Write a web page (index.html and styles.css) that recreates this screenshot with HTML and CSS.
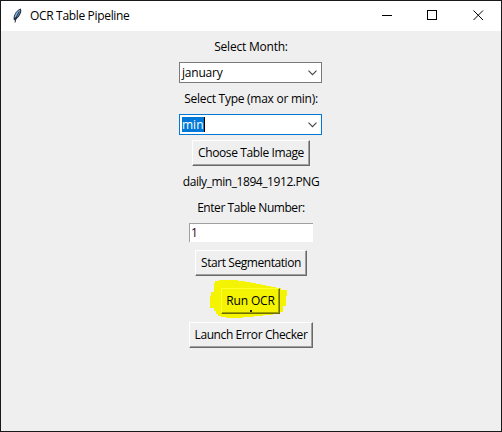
FILE: index.html
```html
<!DOCTYPE html>
<html lang="en">
<head>
<meta charset="utf-8">
<title>OCR Table Pipeline</title>
<link rel="stylesheet" href="styles.css">
</head>
<body>
<div class="window">
  <header class="titlebar">
    <svg class="feather" width="16" height="16" viewBox="0 0 16 16">
      <path d="M5 12.500C3.500 9 6 3 11.500.500c1.800 1.700.4 6-2.300 9l-2.500 2z" fill="#26333f"/>
      <path d="M5.400 9.500C6 6 8 3.200 11 1.500c.6 2.500-1 5.500-3.300 7.800z" fill="#7fb0e4"/>
      <path d="M10.300 3.500Q7 8 6 14.500" fill="none" stroke="#101820" stroke-width=".9"/>
    </svg>
    <h1 class="title"><span class="t w-title">OCR Table Pipeline</span></h1>
    <svg class="control" width="46" height="30" viewBox="0 0 46 30" shape-rendering="crispEdges"><path d="M18 14.500h10" stroke="#000" fill="none"/></svg>
    <svg class="control" width="46" height="30" viewBox="0 0 46 30" shape-rendering="crispEdges"><path d="M17.500 9.500h9v9h-9z" stroke="#000" fill="none"/></svg>
    <svg class="control" width="46" height="30" viewBox="0 0 46 30"><path d="M17.500 9.500l9.500 9.500M27 9.500l-9.500 9.500" stroke="#000" fill="none"/></svg>
  </header>
  <main class="form">
    <div class="label"><span class="t w-month">Select Month:</span></div>
    <div class="combo"><span class="t w-january">january</span>
      <svg class="chevron" width="9" height="6" viewBox="0 0 9 6"><path d="M.5.700l4 4 4-4" fill="none" stroke="#444" stroke-width="1.100"/></svg></div>
    <div class="label"><span class="t w-type">Select Type (max or min):</span></div>
    <div class="combo focused"><span class="t selected">min</span>
      <svg class="chevron" width="9" height="6" viewBox="0 0 9 6"><path d="M.5.700l4 4 4-4" fill="none" stroke="#444" stroke-width="1.100"/></svg></div>
    <div class="button choose"><span class="t w-choose">Choose Table Image</span></div>
    <div class="label"><span class="t w-file">daily_min_1894_1912.PNG</span></div>
    <div class="label"><span class="t w-number">Enter Table Number:</span></div>
    <div class="entry"><span class="t">1</span></div>
    <div class="button start"><span class="t w-start">Start Segmentation</span></div>
    <div class="button run"><span class="t w-run">Run OCR</span>
      <svg class="marker" width="78" height="38" viewBox="0 0 78 38" shape-rendering="crispEdges"><path d="M9 0H28V1H35V2H41V3H46V4H51V5H56V6H61V7H66V8H71V10H77V16H76V26H73V32H70V34H63V35H53V36H44V37H33V38H16V37H11V36H8V34H6V31H4V28H0V16H1V12H4V3H5V1H9z" fill="#f4f400"/></svg>
      <i class="dot"></i>
    </div>
    <div class="button launch"><span class="t w-launch">Launch Error Checker</span></div>
  </main>
</div>
</body>
</html>
```
FILE: styles.css
```css
* { box-sizing: border-box; }
body {
  margin: 0;
  font: 12px/16px "Open Sans", "Noto Sans", sans-serif;
  color: #000;
}
.window {
  width: 502px;
  height: 432px;
  border: 1px solid #1a181a;
  background: #efefef;
  display: flex;
  flex-direction: column;
  overflow: hidden;
}
.titlebar {
  height: 30px;
  flex: none;
  display: flex;
  align-items: center;
  background: #fff;
  padding-left: 8px;
}
.feather { margin-right: 5px; }
.title { margin: 0 auto 0 0; font: inherit; }
.control { flex: none; position: relative; left: 1px; }
.form {
  display: flex;
  flex-direction: column;
  align-items: center;
  gap: 5px;
  padding-top: 5px;
  isolation: isolate;
}
.t { white-space: nowrap; }
.w-title { letter-spacing: -.33px; }
.w-month { letter-spacing: -.22px; }
.w-january { letter-spacing: -.2px; }
.w-type { letter-spacing: -.26px; }
.w-choose { letter-spacing: -.38px; }
.w-file { letter-spacing: -.43px; }
.w-number { letter-spacing: -.45px; }
.w-start { letter-spacing: -.44px; }
.w-run { letter-spacing: -.15px; }
.w-launch { letter-spacing: -.4px; }
.label, .button {
  display: flex;
  align-items: center;
  justify-content: center;
}
.label { height: 21px; }
.combo {
  width: 143px;
  height: 21px;
  margin-right: 1px;
  border: 1px solid #7a7a7a;
  background: #fff;
  display: flex;
  align-items: center;
  justify-content: space-between;
  padding: 0 4px 0 2px;
}
.focused { border-color: #0078d7; }
.selected {
  background: #0078d7;
  color: #fff;
  border-right: 1px solid #000;
  line-height: 15px;
}
.button {
  height: 26px;
  border: 1px solid;
  border-color: #fff #696969 #696969 #fff;
  box-shadow: inset -1px -1px #a0a0a0;
}
.choose { width: 118px; }
.start { width: 112px; margin-top: 3px; }
.run {
  width: 59px;
  margin: 7px 1px 0 0;
  position: relative;
  border-color: #ffff30 #6d6d00 #6d6d00 #ffff30;
  box-shadow: inset -1px -1px #a0a000;
}
.launch { width: 124px; margin-top: 3px; }
.marker {
  position: absolute;
  left: -12px;
  top: -9px;
  z-index: -1;
}
.dot {
  position: absolute;
  left: 28px;
  top: 21px;
  width: 2px;
  height: 2px;
  background: #222;
}
.entry {
  width: 124px;
  height: 19px;
  border: solid;
  border-width: 1px 0 0 1px;
  border-color: #a0a0a0;
  background: #fff;
  padding: 0 1px;
  line-height: 18px;
  color: #202;
}
```
